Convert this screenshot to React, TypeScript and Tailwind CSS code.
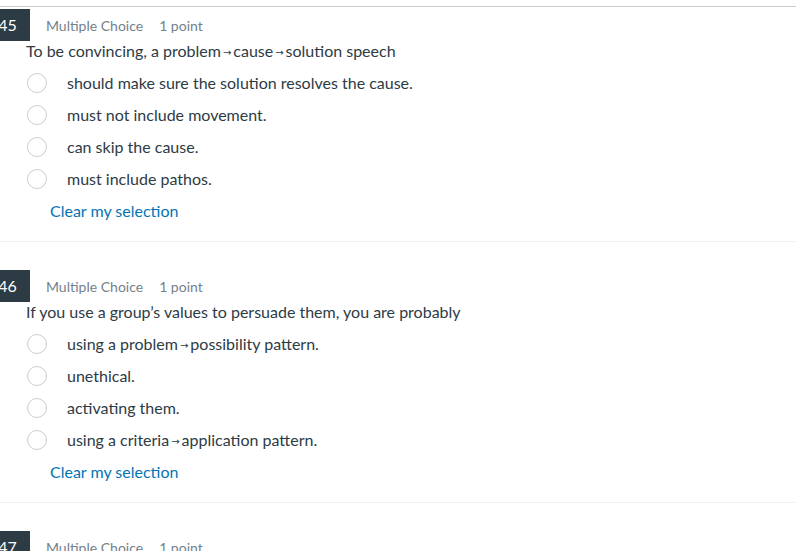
import React from 'react';

interface Question {
  number: number;
  text: string;
  options: string[];
}

const questions: Question[] = [
  {
    number: 45,
    text: 'To be convincing, a problem→cause→solution speech',
    options: [
      'should make sure the solution resolves the cause.',
      'must not include movement.',
      'can skip the cause.',
      'must include pathos.',
    ],
  },
  {
    number: 46,
    text: 'If you use a group’s values to persuade them, you are probably',
    options: [
      'using a problem→possibility pattern.',
      'unethical.',
      'activating them.',
      'using a criteria→application pattern.',
    ],
  },
  {
    number: 47,
    text: '',
    options: [],
  },
];

// 箭头在原图里是小号字形，单独渲染
function WithArrows({ text }: { text: string }) {
  const parts = text.split('→');
  return (
    <>
      {parts.map((p, i) => (
        <React.Fragment key={i}>
          {i > 0 && (
            <span className="mx-[2px] text-[10px] leading-[0] align-[1px]" style={{ fontFamily: '"DejaVu Sans", sans-serif' }}>→</span>
          )}
          {p}
        </React.Fragment>
      ))}
    </>
  );
}

function QuestionBlock({ q, first }: { q: Question; first: boolean }) {
  return (
    <div className={first ? 'pt-[2px] pb-[14px] border-b border-[#f0f0f0]' : 'pt-[28px] pb-[14px] border-b border-[#f0f0f0]'}>
      {/* header */}
      <div className="flex items-center h-[32px]">
        <div className="ml-[-15px] w-[45px] h-[32px] bg-[#2d3b45] text-white text-[16px] flex items-center justify-center">
          {q.number}
        </div>
        <span className="ml-[16px] text-[14px] text-[#73818c]">Multiple Choice</span>
        <span className="ml-[16px] text-[14px] text-[#73818c]">1 point</span>
      </div>

      {/* question */}
      <div className="h-[20px] pl-[26px] text-[16px] leading-[20px] mb-[6px] text-[#2d3b45]">
        <WithArrows text={q.text} />
      </div>

      {/* options */}
      {q.options.map(opt => (
        <div key={opt} className="flex items-center h-[32px] pl-[27px]">
          <span className="w-[20px] h-[20px] rounded-full border border-[#c7cdd1] bg-white shrink-0" />
          <span className="ml-[20px] text-[16px] leading-[20px] text-[#2d3b45]">
            <WithArrows text={opt} />
          </span>
        </div>
      ))}

      <div className="flex items-center h-[32px] pl-[50px]">
        <a href="#" className="text-[16px] text-[#0374b5]">Clear my selection</a>
      </div>
    </div>
  );
}

export default function App() {
  return (
    <div className="w-[796px] h-[551px] overflow-hidden bg-white" style={{ fontFamily: 'Lato, "Noto Sans", sans-serif' }}>
      <div className="mt-[6px] border-t border-[#c7cdd1]">
        {questions.map((q, i) => (
          <QuestionBlock key={q.number} q={q} first={i === 0} />
        ))}
      </div>
    </div>
  );
}
